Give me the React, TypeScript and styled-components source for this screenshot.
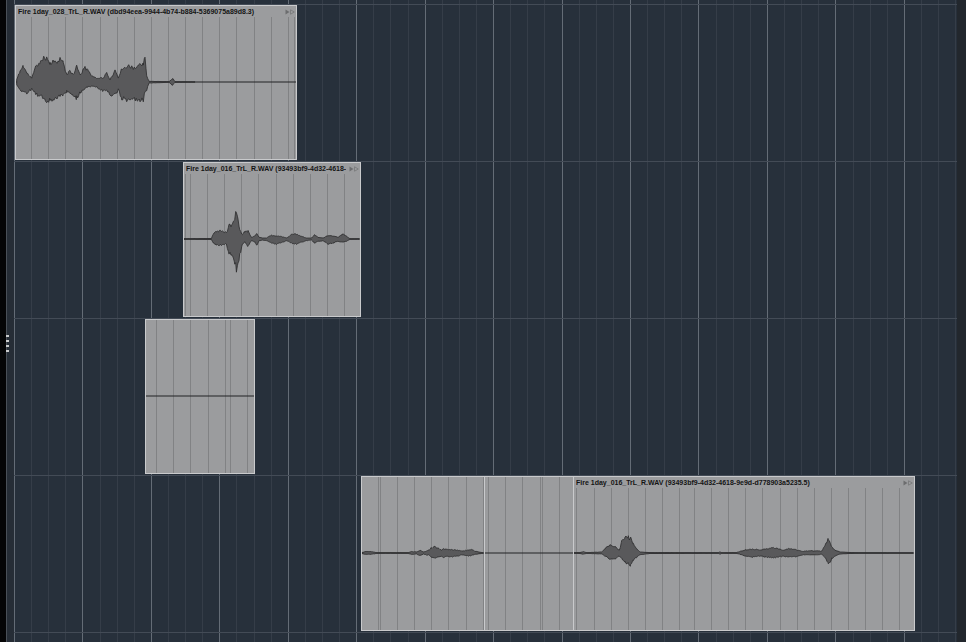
import styled, { createGlobalStyle } from "styled-components";

const GlobalStyle = createGlobalStyle`
  html, body {
    margin: 0;
    padding: 0;
    background: #27303b;
    overflow: hidden;
  }
  body {
    font-family: "Liberation Sans", Arial, sans-serif;
  }
`;

const BEAT = 68.45;
const SUB = BEAT / 4;

type Pt = [number, number, number];

interface IClip {
  id: string;
  left: number;
  width: number;
  name?: string;
  wave?: Pt[];
  seed?: number;
}

interface ITrack {
  id: string;
  clips: IClip[];
}

const Screen = styled.div`
  display: flex;
  width: 966px;
  height: 642px;
  overflow: hidden;
  background: #27303b;
`;

const Gutter = styled.div`
  flex: none;
  width: 14px;
  display: flex;
  flex-direction: column;
  background: linear-gradient(
    90deg,
    #050506 0 6px,
    #4a5058 6px 7px,
    #262d36 7px 14px
  );
`;

const Handle = styled.div`
  margin: 335px 0 0 6px;
  width: 3px;
  height: 17px;
  background: repeating-linear-gradient(
    180deg,
    #c9cacc 0 2px,
    transparent 2px 5px
  );
`;

const Timeline = styled.div`
  flex: 1;
  display: flex;
  flex-direction: column;
  padding-top: 4px;
  background-color: #27303b;
  background-image: repeating-linear-gradient(
      90deg,
      #646c76 0 1px,
      transparent 1px ${BEAT}px
    ),
    repeating-linear-gradient(90deg, #353d48 0 1px, transparent 1px ${SUB}px);
`;

const RightEdge = styled.div`
  flex: none;
  width: 9px;
  background: #22272d;
`;

const Track = styled.div`
  flex: none;
  position: relative;
  box-sizing: border-box;
  height: 157px;
  border-top: 1px solid #434b56;
`;

const ClipBox = styled.div<{ $left: number; $width: number }>`
  position: absolute;
  top: 0;
  left: ${(p) => p.$left}px;
  width: ${(p) => p.$width}px;
  height: 155px;
  box-sizing: border-box;
  border: 1px solid #c9cacc;
  background: #9b9c9e;
  display: flex;
  flex-direction: column;
  overflow: hidden;
`;

const ClipHeader = styled.div`
  flex: none;
  height: 11px;
  display: flex;
  align-items: center;
  padding-left: 2px;
`;

const ClipName = styled.span`
  flex: 1;
  min-width: 0;
  overflow: hidden;
  white-space: nowrap;
  font-size: 7px;
  line-height: 11px;
  font-weight: bold;
  color: #141414;
`;

const ClipIcon = styled.svg`
  flex: none;
  width: 10px;
  height: 6px;
  margin: 0 1px 0 3px;
`;

const ClipBody = styled.div<{ $offset: number }>`
  flex: 1;
  background-color: #9b9c9e;
  background-image: repeating-linear-gradient(
    90deg,
    #818284 0 1px,
    transparent 1px ${SUB}px
  );
  background-position: ${(p) => -p.$offset}px 0;
`;

const WaveSvg = styled.svg`
  display: block;
  width: 100%;
  height: 100%;
`;

function mulberry32(a: number) {
  return function () {
    a |= 0;
    a = (a + 0x6d2b79f5) | 0;
    let t = Math.imul(a ^ (a >>> 15), 1 | a);
    t = (t + Math.imul(t ^ (t >>> 7), 61 | t)) ^ t;
    return ((t ^ (t >>> 14)) >>> 0) / 4294967296;
  };
}

function wavePath(points: Pt[], cy: number, seed: number) {
  const rnd = mulberry32(seed);
  const samples: Pt[] = [];
  for (let i = 0; i < points.length - 1; i++) {
    const [x0, u0, d0] = points[i];
    const [x1, u1, d1] = points[i + 1];
    for (let x = x0; x < x1; x += 1) {
      const t = (x - x0) / (x1 - x0);
      const ju = 0.86 + 0.28 * rnd();
      const jd = 0.86 + 0.28 * rnd();
      samples.push([x, (u0 + (u1 - u0) * t) * ju, (d0 + (d1 - d0) * t) * jd]);
    }
  }
  samples.push(points[points.length - 1]);
  const top = samples.map(([x, u]) => `${(x - 1).toFixed(1)},${(cy - u).toFixed(1)}`);
  const bottom = samples
    .slice()
    .reverse()
    .map(([x, , d]) => `${(x - 1).toFixed(1)},${(cy + d).toFixed(1)}`);
  return `M${top.join("L")}L${bottom.join("L")}Z`;
}

function Waveform({ clip, hasHeader }: { clip: IClip; hasHeader: boolean }) {
  const w = clip.width - 2;
  const h = 153 - (hasHeader ? 11 : 0);
  const cy = 76 - (hasHeader ? 11 : 0);
  return (
    <WaveSvg viewBox={`0 0 ${w} ${h}`} preserveAspectRatio="none">
      <line x1={0} x2={w} y1={cy} y2={cy} stroke="#232324" strokeWidth={1.2} />
      {clip.wave && (
        <path
          d={wavePath(clip.wave, cy, clip.seed ?? 1)}
          fill="#59595b"
          stroke="#2b2b2c"
          strokeWidth={0.8}
          strokeLinejoin="round"
        />
      )}
    </WaveSvg>
  );
}

function Clip({ clip }: { clip: IClip }) {
  const hasHeader = !!clip.name;
  return (
    <ClipBox $left={clip.left} $width={clip.width}>
      {hasHeader && (
        <ClipHeader>
          <ClipName>{clip.name}</ClipName>
          <ClipIcon viewBox="0 0 10 6">
            <path d="M0.5 0.5L4.5 3L0.5 5.5Z" fill="#6c6d6f" />
            <path d="M5.5 0.8L9.3 3L5.5 5.2Z" fill="none" stroke="#767779" strokeWidth={0.8} />
          </ClipIcon>
        </ClipHeader>
      )}
      <ClipBody $offset={clip.left + 1}>
        <Waveform clip={clip} hasHeader={hasHeader} />
      </ClipBody>
    </ClipBox>
  );
}

const wave028: Pt[] = [
  [1.7, 2.3, 2.7], [5, 10.7, 7.7], [8.3, 16.3, 10], [11.7, 9, 11], [16.7, 4, 7],
  [21.7, 17.3, 12.7], [26.7, 20.7, 15], [31.7, 25.7, 19.3], [35, 19, 18], [40, 20.7, 16],
  [45, 23, 14.3], [48.3, 19, 12], [51.7, 7.3, 9.3], [55, 10.7, 11], [58.3, 7.3, 14.3],
  [61.7, 15.7, 16], [65, 7.3, 11], [70, 14, 6], [73.3, 12.3, 5], [76.7, 5.7, 4.3],
  [81.7, 4, 5], [88.3, 4, 9.3], [91.7, 9, 7.7], [95, 2.3, 12.7], [100, 10.7, 12.7],
  [103.3, 4, 7.7], [106.7, 14, 16], [111.7, 15.7, 17.7], [118.3, 14, 17.7], [125, 17.3, 17.7],
  [128.3, 19, 17.7], [130, 22.3, 10], [131.7, 5.7, 7.7], [134, 0.7, 1], [154, 0.3, 0.3],
  [157, 3, 3], [158, 3.5, 2.5], [160, 0.3, 0.3], [180, 0.1, 0.1],
];

const wave016a: Pt[] = [
  [1, 0.2, 0.2], [28.4, 0.5, 0.5], [30, 5, 4], [33.4, 7.7, 5.7], [38.4, 8.3, 6.3],
  [43.4, 6, 5], [46, 13, 14], [49.4, 14.3, 15.7], [51.7, 21, 22.3], [53.4, 29.3, 29.7],
  [55, 22.7, 25.7], [56.7, 9.3, 15.7], [59.4, 4.3, 5.7], [61.7, 7.7, 3], [65, 7.7, 7.3],
  [68.4, 1.7, 1.7], [71.7, 2.7, 3], [74, 5.7, 5.7], [76, 1.7, 1.7], [80, 1, 1],
  [83.4, 1, 1.7], [88.4, 3.7, 4], [93.4, 3, 5], [98.4, 2.3, 4], [103.4, 1, 1.7],
  [108.4, 4.3, 4], [113.4, 5, 5], [118.4, 2.7, 3], [123.4, 1, 1.7], [128.4, 1, 1],
  [131.7, 4.3, 4], [135, 1.7, 2.3], [140, 1, 1.7], [145, 3.7, 5], [150, 3, 4],
  [155, 1.7, 2.3], [160, 5, 3], [163.4, 2.7, 2.3], [166.7, 0.5, 0.5], [176, 0.2, 0.2],
];

const waveBar1: Pt[] = [
  [1, 0.5, 0.5], [4, 1.3, 1.3], [10.7, 1.3, 1.3], [15.7, 0.4, 0.4], [47.3, 0.4, 0.4],
  [50.7, 1.5, 1.5], [55.7, 1, 1], [59, 2.7, 2.7], [62.3, 1, 1], [65.7, 2, 2],
  [67.3, 2.7, 1.7], [70, 5, 4], [74, 6, 5], [78, 4.3, 4], [80.7, 2.7, 3],
  [82.3, 4.3, 5], [85.7, 3.7, 3.3], [90.7, 3.3, 4], [97.3, 2.7, 3], [100.7, 2, 1.7],
  [107.3, 2.7, 3], [110.7, 3.7, 2.3], [114, 1.7, 1.3], [120.7, 0.5, 0.5], [122, 0.2, 0.2],
];

const wave016b: Pt[] = [
  [1, 0.3, 0.3], [7, 0.5, 0.5], [10.3, 1.3, 1.3], [13.7, 0.4, 0.4], [28.7, 1, 1],
  [32, 4.3, 3], [37, 8.3, 5.7], [42, 6, 5.7], [46.3, 2.7, 3], [48.7, 11, 5.7],
  [52, 16.7, 9], [55.3, 15.7, 10.7], [57.7, 14.3, 12.3], [60.3, 9.3, 7.3], [63.7, 4.3, 4],
  [67, 1, 1.7], [77, 0.4, 0.5], [145.3, 0.2, 0.2], [147, 1.2, 1.2], [148.7, 0.2, 0.2],
  [163.7, 0.5, 0.5], [167, 1.7, 1.3], [173.7, 3.3, 3.3], [180.3, 4, 4], [187, 2.7, 3],
  [193.7, 4.3, 4], [200.3, 5, 5], [205.3, 4.3, 4], [210.3, 2.7, 3], [215.3, 4.3, 4],
  [220.3, 3.7, 4], [225.3, 2.7, 3], [230.3, 1.7, 1.7], [237, 2.3, 1.7], [243.7, 2, 1.7],
  [248.7, 1.7, 1.3], [252, 7.7, 4], [255.3, 14.3, 11.7], [258.7, 6, 5.7], [262, 2.7, 3],
  [267, 1, 1], [277, 0.5, 0.5], [287, 0.2, 0.2], [340, 0.1, 0.1],
];

const tracks: ITrack[] = [
  {
    id: "t1",
    clips: [
      {
        id: "c1",
        left: 1,
        width: 282,
        name: "Fire 1day_028_TrL_R.WAV (dbd94eea-9944-4b74-b884-5369075a89d8.3)",
        wave: wave028,
        seed: 11,
      },
    ],
  },
  {
    id: "t2",
    clips: [
      {
        id: "c2",
        left: 169,
        width: 178,
        name: "Fire 1day_016_TrL_R.WAV (93493bf9-4d32-4618-9e9d-d778903a5235.5)",
        wave: wave016a,
        seed: 23,
      },
    ],
  },
  {
    id: "t3",
    clips: [{ id: "c3", left: 131, width: 110 }],
  },
  {
    id: "t4",
    clips: [
      { id: "c4", left: 347, width: 124, wave: waveBar1, seed: 5 },
      { id: "c5", left: 470, width: 90 },
      {
        id: "c6",
        left: 559,
        width: 342,
        name: "Fire 1day_016_TrL_R.WAV (93493bf9-4d32-4618-9e9d-d778903a5235.5)",
        wave: wave016b,
        seed: 42,
      },
    ],
  },
  { id: "t5", clips: [] },
];

export default function App() {
  return (
    <>
      <GlobalStyle />
      <Screen>
        <Gutter>
          <Handle />
        </Gutter>
        <Timeline>
          {tracks.map((track) => (
            <Track key={track.id}>
              {track.clips.map((clip) => (
                <Clip key={clip.id} clip={clip} />
              ))}
            </Track>
          ))}
        </Timeline>
        <RightEdge />
      </Screen>
    </>
  );
}
